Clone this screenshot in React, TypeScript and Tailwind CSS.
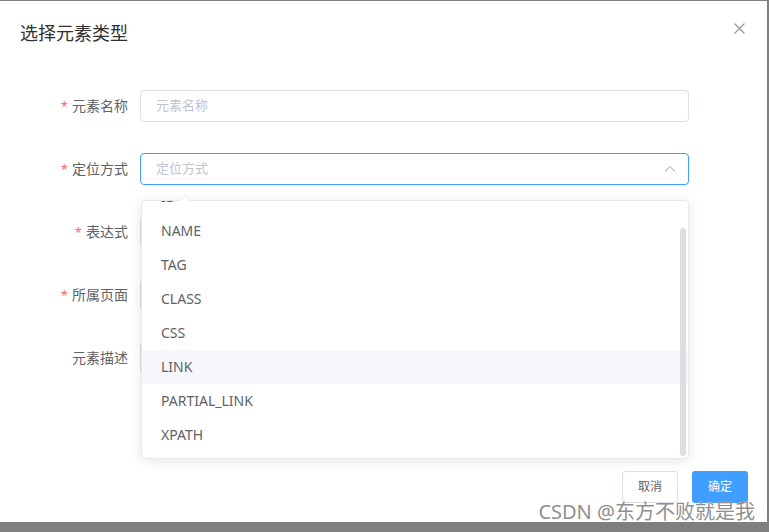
import React from "react";

const font = { fontFamily: '"Noto Sans", "Noto Sans CJK SC", sans-serif' };

function Label({ text, required }: { text: string; required?: boolean }) {
  return (
    <div className="w-[128px] shrink-0 pr-0 flex justify-end items-center text-[14px] text-[#606266] leading-[32px]">
      {required && <span className="text-[#f56c6c] mr-[4px] text-[13px]">*</span>}
      <span>{text}</span>
    </div>
  );
}

function Row({ label, required, placeholder, active, arrow }: { label: string; required?: boolean; placeholder?: string; active?: boolean; arrow?: boolean }) {
  return (
    <div className="flex items-center h-[32px] mb-[31px]">
      <Label text={label} required={required} />
      <div
        className={`ml-[12px] w-[549px] h-[32px] rounded-[4px] border flex items-center pl-[15px] pr-[12px] text-[13px] ${
          active ? "border-[#409eff]" : "border-[#dcdfe6]"
        }`}
      >
        <span className="flex-1 text-[#c0c4cc]">{placeholder}</span>
        {arrow && (
          <svg width="12" height="8" viewBox="0 0 12 8">
            <path d="M1 6.5 L6 1.5 L11 6.5" fill="none" stroke="#c0c4cc" strokeWidth="1.2" />
          </svg>
        )}
      </div>
    </div>
  );
}

const items = ["ID", "NAME", "TAG", "CLASS", "CSS", "LINK", "PARTIAL_LINK", "XPATH"];

export default function App() {
  return (
    <div className="w-[769px] h-[532px] bg-[#7f7f7f] pt-[1px] relative overflow-hidden" style={font}>
      <div className="w-[767px] h-[521px] bg-white relative">
        <div className="flex items-center justify-between pt-[20px] pl-[20px] pr-[22px]">
          <span className="text-[18px] leading-[24px] text-[#303133]">选择元素类型</span>
          <svg width="11" height="11" viewBox="0 0 11 11" className="mt-[-10px]">
            <path d="M0.5 0.5 L10.5 10.5 M10.5 0.5 L0.5 10.5" stroke="#909399" strokeWidth="1.1" />
          </svg>
        </div>
        <div className="pt-[45px]">
          <Row label="元素名称" required placeholder="元素名称" />
          <Row label="定位方式" required placeholder="定位方式" active arrow />
          <Row label="表达式" required />
          <Row label="所属页面" required />
          <Row label="元素描述" />
        </div>
        <div className="absolute right-[19px] bottom-[19px] flex gap-[14px]">
          <button className="w-[56px] h-[32px] rounded-[3px] border border-[#dcdfe6] bg-white text-[12px] text-[#606266]">取消</button>
          <button className="w-[56px] h-[32px] rounded-[3px] bg-[#409eff] text-[12px] text-white">确定</button>
        </div>

        {/* dropdown */}
        <div className="absolute left-[141px] top-[199px] w-[548px] h-[259px] bg-white border border-[#e4e7ed] rounded-[4px] shadow-[0_2px_12px_rgba(0,0,0,0.1)]">
          <div className="absolute left-[37px] top-[-6px] w-0 h-0 border-l-[6px] border-r-[6px] border-b-[6px] border-l-transparent border-r-transparent border-b-[#e4e7ed]" />
          <div className="absolute left-[38px] top-[-5px] w-0 h-0 border-l-[5px] border-r-[5px] border-b-[5px] border-l-transparent border-r-transparent border-b-white" />
          <div className="h-full overflow-hidden rounded-[4px]">
            <div className="mt-[-21px]">
              {items.map((it) => (
                <div
                  key={it}
                  className={`h-[34px] leading-[34px] pl-[19px] text-[14px] text-[#606266] ${it === "LINK" ? "bg-[#f5f7fa]" : ""}`}
                >
                  {it}
                </div>
              ))}
            </div>
          </div>
          <div className="absolute left-[538px] top-[27px] w-[6px] h-[228px] rounded-[3px] bg-[#dddee0]" />
        </div>
      </div>
      <div className="absolute right-[14px] bottom-[8px] text-[20px] leading-[24px] text-[#8f8f8f]" style={{ textShadow: "0 0 1px #fff" }}>
        CSDN @东方不败就是我
      </div>
    </div>
  );
}
